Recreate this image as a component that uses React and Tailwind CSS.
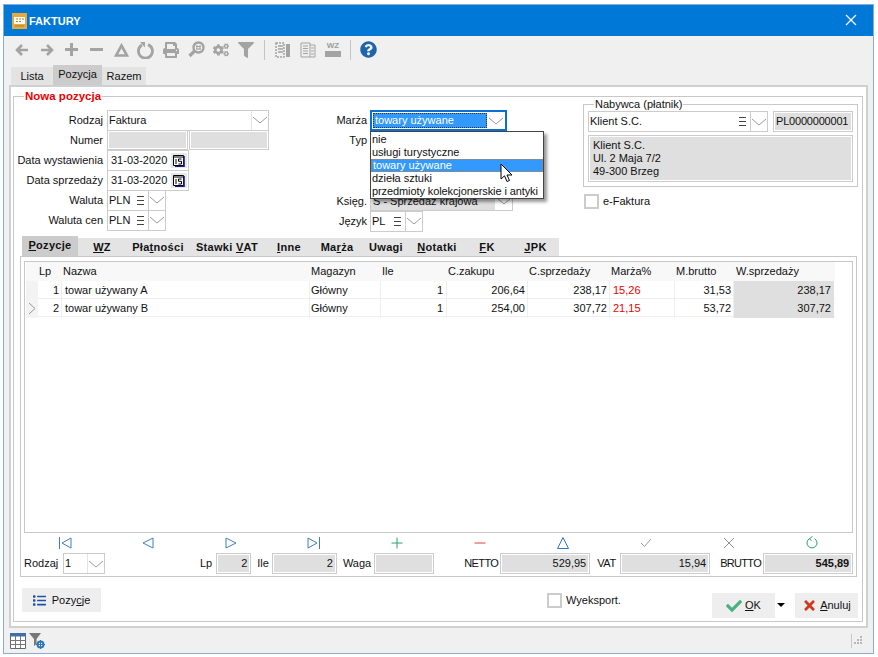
import React from "react";
import { FaPrint, FaCogs, FaFilter, FaQuestionCircle, FaList, FaCheck, FaTimes } from "react-icons/fa";

const F = "[font-family:'Liberation_Sans',Arial,sans-serif]";

const Chev = () => (
  <svg width="16" height="10" viewBox="0 0 16 10" className="shrink-0">
    <path d="M1 2 L8 8 L15 2" fill="none" stroke="#9a9a9a" strokeWidth="1" />
  </svg>
);
const Burger = () => (
  <svg width="9" height="11" viewBox="0 0 9 11" className="shrink-0">
    <path d="M1 1.5H8M1 5.5H8M1 9.5H8" stroke="#444" strokeWidth="1" />
  </svg>
);

function Select({ w, text, burger, h = "h-[21px]" }) {
  return (
    <div className={`flex ${h} shrink-0 items-stretch border border-[#ccc] bg-white`} style={{ width: w }}>
      <span className="flex-1 truncate pl-[1px] leading-[19px]">{text}</span>
      {burger && <span className="flex w-[16px] items-center justify-center"><Burger /></span>}
      <span className={`flex w-[17px] items-center justify-center ${burger ? "border-l border-[#ccc]" : "border-l border-[#e4e4e4]"}`}><Chev /></span>
    </div>
  );
}

function Grey({ w, children, right, bold, tight, h = "h-[21px]" }) {
  return (
    <div className={`${h} shrink-0 border border-[#ccc] bg-white p-[1px]`} style={{ width: w }}>
      <div className={`h-full whitespace-nowrap bg-[#dfdfdf] leading-[16px] ${tight ? "px-[1px] tracking-[-0.2px]" : "px-[2px]"} ${right ? "text-right" : ""} ${bold ? "font-bold" : ""}`}>{children}</div>
    </div>
  );
}

function Label({ w, children }) {
  return <span className="shrink-0 text-right" style={{ width: w }}>{children}</span>;
}

function DateField() {
  return (
    <div className="flex h-[21px] w-[82px] items-center border border-[#ccc] bg-white pl-[3px]">
      <span className="flex-1">31-03-2020</span>
      <span className="mr-[1px] flex h-[15px] w-[16px] items-center justify-center bg-[#e8e8e8]">
        <svg width="13" height="13" viewBox="0 0 13 13">
          <path d="M0.5 1.5H10.5V11.5H0.5Z" fill="#fff" stroke="#000" />
          <path d="M11 2V12.5H2" fill="none" stroke="#1a1a8c" strokeWidth="1.6" />
          <path d="M0.5 3H10.5" stroke="#000" />
          <path d="M3 5V10M5.5 5H8.5M5.5 5V7.3H8.5V10H5.5" fill="none" stroke="#000" />
        </svg>
      </span>
    </div>
  );
}

const G = "#a3a3a3";
function ToolIcon({ children }) {
  return <span className="flex h-[20px] w-[18px] items-center justify-center">{children}</span>;
}

function Toolbar() {
  return (
    <div className="flex h-[28px] shrink-0 items-center pb-[1px] pl-[9px]">
      <div className="flex w-[242px] items-center justify-between">
        <ToolIcon><svg width="14" height="14" viewBox="0 0 14 14"><path d="M7 2 L2 7 L7 12 M2 7H13" fill="none" stroke={G} strokeWidth="2.6" /></svg></ToolIcon>
        <ToolIcon><svg width="14" height="14" viewBox="0 0 14 14"><path d="M7 2 L12 7 L7 12 M1 7H12" fill="none" stroke={G} strokeWidth="2.6" /></svg></ToolIcon>
        <ToolIcon><svg width="15" height="15" viewBox="0 0 15 15"><path d="M7.5 1V14M1 7.5H14" stroke={G} strokeWidth="3" /></svg></ToolIcon>
        <ToolIcon><svg width="15" height="15" viewBox="0 0 15 15"><path d="M1 7.5H14" stroke={G} strokeWidth="3" /></svg></ToolIcon>
        <ToolIcon><svg width="15" height="14" viewBox="0 0 15 14"><path d="M7.5 2.5 L13 12.5 H2 Z" fill="none" stroke={G} strokeWidth="2.6" /></svg></ToolIcon>
        <ToolIcon><svg width="18" height="18" viewBox="0 0 18 18"><path d="M11 3.6 A7 7 0 1 1 5 4" fill="none" stroke={G} strokeWidth="2.8" /><path d="M3 1 L8 1 L8 6.5Z" fill={G} /></svg></ToolIcon>
        <ToolIcon><FaPrint size={16} color={G} /></ToolIcon>
        <ToolIcon><svg width="17" height="17" viewBox="0 0 17 17"><circle cx="10.5" cy="6.5" r="5" fill="none" stroke={G} strokeWidth="2.4" /><path d="M7 9.5 L1.5 15" stroke={G} strokeWidth="3.2" /><path d="M9 4V9M12 4V9M8 5.5H13M8 8H13" stroke={G} strokeWidth="1" /></svg></ToolIcon>
        <ToolIcon><FaCogs size={16} color={G} /></ToolIcon>
        <ToolIcon><FaFilter size={16} color={G} /></ToolIcon>
      </div>
      <span className="ml-[9px] h-[20px] w-[1px] bg-[#c4c4c4]" />
      <div className="ml-[9px] flex w-[68px] items-center justify-between">
        <ToolIcon><svg width="16" height="16" viewBox="0 0 16 16"><path d="M1 1H9V15H1Z" fill="none" stroke={G} strokeWidth="1.5" strokeDasharray="2 1" /><path d="M3 4H8M3 7H8M3 10H8" stroke={G} strokeWidth="1.5" /><path d="M11 2H15V15H11Z" fill={G} /></svg></ToolIcon>
        <ToolIcon><svg width="16" height="16" viewBox="0 0 16 16"><path d="M1 1H10V15H1Z" fill="#eee" stroke={G} /><path d="M10 3H15V15H10" fill="none" stroke={G} /><path d="M3 4H8M3 6.5H8M3 9H8M3 11.5H8M11 6H14M11 9H14M11 12H14" stroke={G} /></svg></ToolIcon>
        <span className="flex h-[18px] w-[18px] flex-col items-center">
          <span className="text-[8px] font-bold leading-[9px] text-[#9d9d9d]">WZ</span>
          <svg width="16" height="8" viewBox="0 0 16 8"><path d="M0 1H16V7H0Z" fill={G} /></svg>
        </span>
      </div>
      <span className="ml-[8px] h-[20px] w-[1px] bg-[#c4c4c4]" />
      <span className="ml-[9px]"><FaQuestionCircle size={17} color="#1f63a8" /></span>
    </div>
  );
}

const cols = "grid grid-cols-[12px_24px_248px_71px_66px_81px_82px_65px_59px_100px]";
const rows = [
  ["1", "towar używany A", "Główny", "1", "206,64", "238,17", "15,26", "31,53", "238,17"],
  ["2", "towar używany B", "Główny", "1", "254,00", "307,72", "21,15", "53,72", "307,72"],
];

function Table() {
  const head = ["", "Lp", "Nazwa", "Magazyn", "Ile", "C.zakupu", "C.sprzedaży", "Marża%", "M.brutto", "W.sprzedaży"];
  return (
    <div className="flex-1 bg-white">
      <div className={`${cols} h-[19px] w-[809px] items-center bg-[#f8f8f8]`}>
        {head.map((t, i) => (
          <span key={i} className={`truncate ${i === 9 ? "pl-[2px]" : "pl-[1px]"}`}>{t}</span>
        ))}
      </div>
      {rows.map((r, ri) => (
        <div key={ri} className={`${cols} h-[18px] w-[809px] border-b border-[#eeeeee] leading-[19px]`}>
          <span className="flex items-center justify-center bg-[#f3f3f3]">
            {ri === 1 && <svg width="8" height="13" viewBox="0 0 8 13"><path d="M1 1 L7 6.5 L1 12" fill="none" stroke="#999" /></svg>}
          </span>
          <span className="border-r border-[#eee] pr-[2px] text-right">{r[0]}</span>
          <span className="border-r border-[#eee] pl-[3px]">{r[1]}</span>
          <span className="border-r border-[#eee] pl-[1px]">{r[2]}</span>
          <span className="border-r border-[#eee] pr-[3px] text-right">{r[3]}</span>
          <span className="border-r border-[#eee] pr-[2px] text-right">{r[4]}</span>
          <span className="border-r border-[#eee] pr-[2px] text-right">{r[5]}</span>
          <span className="border-r border-[#eee] pl-[3px] text-[#f00000]">{r[6]}</span>
          <span className="border-r border-[#eee] pr-[2px] text-right">{r[7]}</span>
          <span className="bg-[#dfdfdf] pr-[3px] text-right">{r[8]}</span>
        </div>
      ))}
    </div>
  );
}

const B = "#3f7fbf";
const navIcons = [
  <svg width="14" height="14" viewBox="0 0 14 14"><path d="M1.5 1V13M13 2V12L4 7Z" fill="none" stroke={B} /></svg>,
  <svg width="14" height="14" viewBox="0 0 14 14"><path d="M12 2V12L2 7Z" fill="none" stroke={B} /></svg>,
  <svg width="14" height="14" viewBox="0 0 14 14"><path d="M2 2V12L12 7Z" fill="none" stroke={B} /></svg>,
  <svg width="14" height="14" viewBox="0 0 14 14"><path d="M12.5 1V13M1 2V12L10 7Z" fill="none" stroke={B} /></svg>,
  <svg width="14" height="14" viewBox="0 0 14 14"><path d="M7 1.5V12.5M1.5 7H12.5" fill="none" stroke="#2ba36b" /></svg>,
  <svg width="14" height="14" viewBox="0 0 14 14"><path d="M1.5 7H12.5" fill="none" stroke="#d9432f" /></svg>,
  <svg width="14" height="14" viewBox="0 0 14 14"><path d="M7 1.5 L12.5 12.5 H1.5 Z" fill="none" stroke="#2f78b7" /></svg>,
  <svg width="14" height="14" viewBox="0 0 14 14"><path d="M2 7 L5.5 10.5 L12 3" fill="none" stroke="#9a9a9a" /></svg>,
  <svg width="14" height="14" viewBox="0 0 14 14"><path d="M2 2 L12 12 M12 2 L2 12" fill="none" stroke="#8f8f8f" /></svg>,
  <svg width="14" height="14" viewBox="0 0 14 14"><path d="M9.5 2.6 A5 5 0 1 1 4.5 2.6" fill="none" stroke="#2ba36b" /><path d="M7.5 0.5 L4.5 2.6 L6.5 5" fill="none" stroke="#2ba36b" /></svg>,
];

function Under({ pre, u, post }) {
  return <>{pre}<span className="underline">{u}</span>{post}</>;
}

const tabs = [
  ["", "P", "ozycje", 56], ["", "W", "Z", 48], ["Pła", "t", "ności", 64], ["Stawki ", "V", "AT", 74], ["", "I", "nne", 50],
  ["Ma", "r", "ża", 46], ["Uwa", "g", "i", 52], ["", "N", "otatki", 50], ["", "F", "K", 50], ["", "J", "PK", 47],
];

export default function App() {
  return (
    <div className={`h-[657px] w-[878px] bg-white pb-[3px] pl-[3px] pr-[4px] pt-[4px] text-[11px] leading-[13px] text-[#111] ${F}`}>
      <div className="flex h-[650px] flex-col border border-[#8daad0] bg-[#f0f0f0]">
        {/* title */}
        <div className="flex h-[31px] shrink-0 items-center bg-[#0078d7] pl-[8px] pr-[16px] text-white">
          <svg width="15" height="16" viewBox="0 0 15 16">
            <path d="M0 0H15V16H0Z" fill="#e8a93c" />
            <path d="M2 4H13V11H2Z" fill="#fff" />
            <path d="M4 6H6M7 6H9M10 6H12M4 8.5H6M7 8.5H9M3 13H12" stroke="#b57f1e" />
          </svg>
          <span className="ml-[2px] flex-1 pt-[1px] text-[11px] font-bold">FAKTURY</span>
          <svg className="mb-[1px]" width="12" height="12" viewBox="0 0 12 12"><path d="M1 1 L11 11 M11 1 L1 11" stroke="#fff" strokeWidth="1.2" /></svg>
        </div>
        <Toolbar />
        {/* page tabs */}
        <div className="flex h-[21px] shrink-0 items-end pl-[7px] pt-[2px]">
          <span className="flex h-[18px] w-[42px] items-center justify-center bg-[#e3e3e3]">Lista</span>
          <span className="flex h-[20px] w-[49px] items-center justify-center bg-[#cccccc] pb-[2px]">Pozycja</span>
          <span className="flex h-[18px] w-[44px] items-center justify-center bg-[#e3e3e3]">Razem</span>
        </div>
        {/* panel */}
        <div className="mx-[5px] flex h-[543px] shrink-0 flex-col border-2 border-[#d0d0d0] bg-white pl-[2px] pr-[3px] pt-[9px]">
          <div className="relative flex h-[526px] flex-col border border-[#c8c8c8] bg-white">
            <span className="absolute left-[10px] top-[-7px] bg-white px-[1px] text-[11.5px] font-bold text-[#f00000]">Nowa pozycja</span>
            {/* form */}
            <div className="flex h-[139px] shrink-0 pt-[7px]">
              <div className="flex w-[256px] shrink-0 flex-col gap-0 pt-[6px]">
                {[
                  ["Rodzaj", <Select w={162} text="Faktura" />],
                  ["Numer", <div className="flex gap-[1px]"><Grey w={81} h="h-[20px]" /><Grey w={80} h="h-[20px]" /></div>],
                  ["Data wystawienia", <DateField />],
                  ["Data sprzedaży", <DateField />],
                  ["Waluta", <Select w={59} text="PLN" burger />],
                  ["Waluta cen", <Select w={59} text="PLN" burger />],
                ].map(([l, c], i) => (
                  <div key={i} className="flex h-[20px] items-center gap-[4px]">
                    <Label w={89}>{l}</Label>{c}
                  </div>
                ))}
              </div>
              <div className="relative ml-[30px] flex w-[230px] shrink-0 flex-col pt-[6px]">
                <div className="flex h-[21px] items-center gap-[3px]">
                  <Label w={67}>Marża</Label>
                  <div className="flex h-[21px] w-[137px] items-stretch border-2 border-[#0a6fd0] bg-white p-[1px]">
                    <span className="flex-1 border border-dotted border-[#333] bg-[#3399ff] pl-[1px] leading-[13px] text-white">towary używane</span>
                    <span className="flex w-[17px] items-center justify-center"><Chev /></span>
                  </div>
                </div>
                <div className="flex h-[60px] gap-[3px] pt-[3px]"><Label w={67}>Typ</Label></div>
                <div className="flex h-[20px] items-center gap-[3px]">
                  <Label w={67}>Księg.</Label>
                  <div className="flex h-[20px] w-[143px] items-stretch border border-[#ccc]">
                    <span className="flex-1 bg-[#dfdfdf] pl-[2px] leading-[18px]">S - Sprzedaż krajowa</span>
                    <span className="flex w-[17px] items-center justify-center"><Chev /></span>
                  </div>
                </div>
                <div className="flex h-[20px] items-center gap-[3px]">
                  <Label w={67}>Język</Label>
                  <Select w={53} text="PL" burger />
                </div>
                {/* dropdown */}
                <div className="absolute left-[70px] top-[27px] z-10 h-[68px] w-[174px] border border-[#444] bg-white pt-[1px] shadow-[3px_3px_3px_rgba(0,0,0,0.4)]">
                  <div className="h-[13px] pl-[1px]">nie</div>
                  <div className="h-[13px] pl-[1px]">usługi turystyczne</div>
                  <div className="h-[13px] border border-dotted border-[#c9802c] bg-[#3399ff] pl-[1px] leading-[11px] text-white">towary używane</div>
                  <div className="h-[13px] pl-[1px]">dzieła sztuki</div>
                  <div className="h-[13px] whitespace-nowrap pl-[1px] tracking-[-0.1px]">przedmioty kolekcjonerskie i antyki</div>
                  <svg className="absolute left-[129px] top-[31px]" width="14" height="21" viewBox="0 0 14 21">
                    <path d="M1 1V16L4.5 12.8L7 18.5L9.5 17.5L7 12H12Z" fill="#fff" stroke="#000" />
                  </svg>
                </div>
              </div>
              <div className="ml-[53px] flex flex-col">
                <div className="relative flex h-[83px] w-[275px] flex-col gap-[3px] border border-[#c8c8c8] pl-[4px] pt-[6px]">
                  <span className="absolute left-[10px] top-[-7px] bg-white px-[1px]">Nabywca (płatnik)</span>
                  <div className="flex gap-[5px]">
                    <Select w={180} text="Klient S.C." burger />
                    <Grey w={80} tight>PL0000000001</Grey>
                  </div>
                  <div className="h-[47px] w-[265px] border border-[#ccc] bg-white p-[1px]">
                    <div className="h-full bg-[#dfdfdf] pl-[3px] pt-[2px]">Klient S.C.<br />Ul. 2 Maja 7/2<br />49-300 Brzeg</div>
                  </div>
                </div>
                <div className="mt-[7px] flex items-center gap-[4px] pl-[1px]">
                  <span className="h-[15px] w-[15px] border-2 border-[#ccc] bg-white" />
                  <span>e-Faktura</span>
                </div>
              </div>
            </div>
            {/* inner tabs */}
            <div className="ml-[8px] flex h-[20px] w-[536px] shrink-0 items-end">
              {tabs.map(([a, u, b, w], i) => (
                <span key={i} style={{ width: w }} className={`flex shrink-0 items-center justify-center whitespace-pre font-bold tracking-[0.3px] ${i === 0 ? "h-[20px] bg-[#cccccc] pb-[2px]" : "h-[18px] bg-[#e4e4e4]"}`}>
                  <Under pre={a} u={u} post={b} />
                </span>
              ))}
            </div>
            {/* grid box */}
            <div className="ml-[6px] mr-[5px] flex h-[321px] shrink-0 flex-col border border-[#c8c8c8] pb-[1px] pl-[3px] pr-[3px] pt-[4px]">
              <div className="flex h-[272px] shrink-0 border border-[#c8c8c8] pl-[1px]">
                <Table />
              </div>
              <div className="grid h-[20px] shrink-0 grid-cols-10 items-center">
                {navIcons.map((ic, i) => <span key={i} className="flex justify-center">{ic}</span>)}
              </div>
              <div className="flex h-[21px] shrink-0 items-center whitespace-nowrap">
                <span className="w-[39px] shrink-0">Rodzaj</span>
                <Select w={42} text=" 1" />
                <span className="ml-[95px]">Lp</span>
                <span className="ml-[4px]"><Grey w={35} right>2</Grey></span>
                <span className="ml-[6px]">Ile</span>
                <span className="ml-[3px]"><Grey w={65} right>2</Grey></span>
                <span className="ml-[6px]">Waga</span>
                <span className="ml-[3px]"><Grey w={60} /></span>
                <span className="ml-[30px] w-[33px] shrink-0 tracking-[-0.6px]">NETTO</span>
                <span className="ml-[3px]"><Grey w={90} right>529,95</Grey></span>
                <span className="ml-[7px] w-[18px] shrink-0 tracking-[-0.4px]">VAT</span>
                <span className="ml-[5px]"><Grey w={90} right>15,94</Grey></span>
                <span className="ml-[10px] w-[40px] shrink-0 tracking-[-0.7px]">BRUTTO</span>
                <span className="ml-[3px]"><Grey w={90} right bold>545,89</Grey></span>
              </div>
            </div>
            {/* footer */}
            <div className="flex flex-1 items-start pl-[8px] pt-[11px]">
              <span className="flex h-[24px] w-[79px] items-center justify-center gap-[6px] bg-[#eeeeee]">
                <FaList size={13} color="#1f4fa8" />
                <span>Pozy<span className="underline">c</span>je</span>
              </span>
              <div className="ml-[446px] mt-[5px] flex items-center gap-[4px]">
                <span className="h-[15px] w-[15px] border-2 border-[#ccc] bg-white" />
                <span>Wyeksport.</span>
              </div>
              <span className="ml-[91px] mt-[5px] flex h-[25px] w-[63px] items-center justify-center gap-[3px] bg-[#eeeeee]">
                <FaCheck size={16} color="#4caf82" />
                <span><span className="underline">O</span>K</span>
              </span>
              <span className="ml-[2px] mt-[15px] h-0 w-0 border-x-[4px] border-t-[4px] border-x-transparent border-t-black" />
              <span className="ml-[10px] mt-[5px] flex h-[25px] w-[63px] items-center justify-center gap-[3px] bg-[#eeeeee]">
                <FaTimes size={15} color="#d0391f" />
                <span><span className="underline">A</span>nuluj</span>
              </span>
            </div>
          </div>
        </div>
        {/* status bar */}
        <div className="flex flex-1 items-center pl-[6px] pr-[10px]">
          <svg width="16" height="16" viewBox="0 0 16 16">
            <path d="M0.5 0.5H15.5V15.5H0.5Z" fill="#fff" stroke="#666" />
            <path d="M0 0H16V3.5H0Z" fill="#3f6fa8" />
            <path d="M0.5 7.5H15.5M0.5 11.5H15.5M5.5 3V15M10.5 3V15" stroke="#777" />
          </svg>
          <svg className="ml-[3px]" width="16" height="16" viewBox="0 0 16 16">
            <path d="M0 0H12L7.5 6V11L5 13V6Z" fill="#777" />
            <circle cx="11.5" cy="11.5" r="3" fill="none" stroke="#2f78b7" strokeWidth="2" />
            <path d="M11.5 7V16M7 11.5H16" stroke="#2f78b7" />
          </svg>
          <span className="flex-1" />
          <span className="mr-[2px] h-[14px] w-[1px] bg-[#c8c8c8]" />
          <svg width="9" height="9" viewBox="0 0 9 9">
            <path d="M6 0H8V2H6ZM3 3H5V5H3ZM6 3H8V5H6ZM0 6H2V8H0ZM3 6H5V8H3ZM6 6H8V8H6Z" fill="#b8b8b8" />
          </svg>
        </div>
      </div>
    </div>
  );
}
